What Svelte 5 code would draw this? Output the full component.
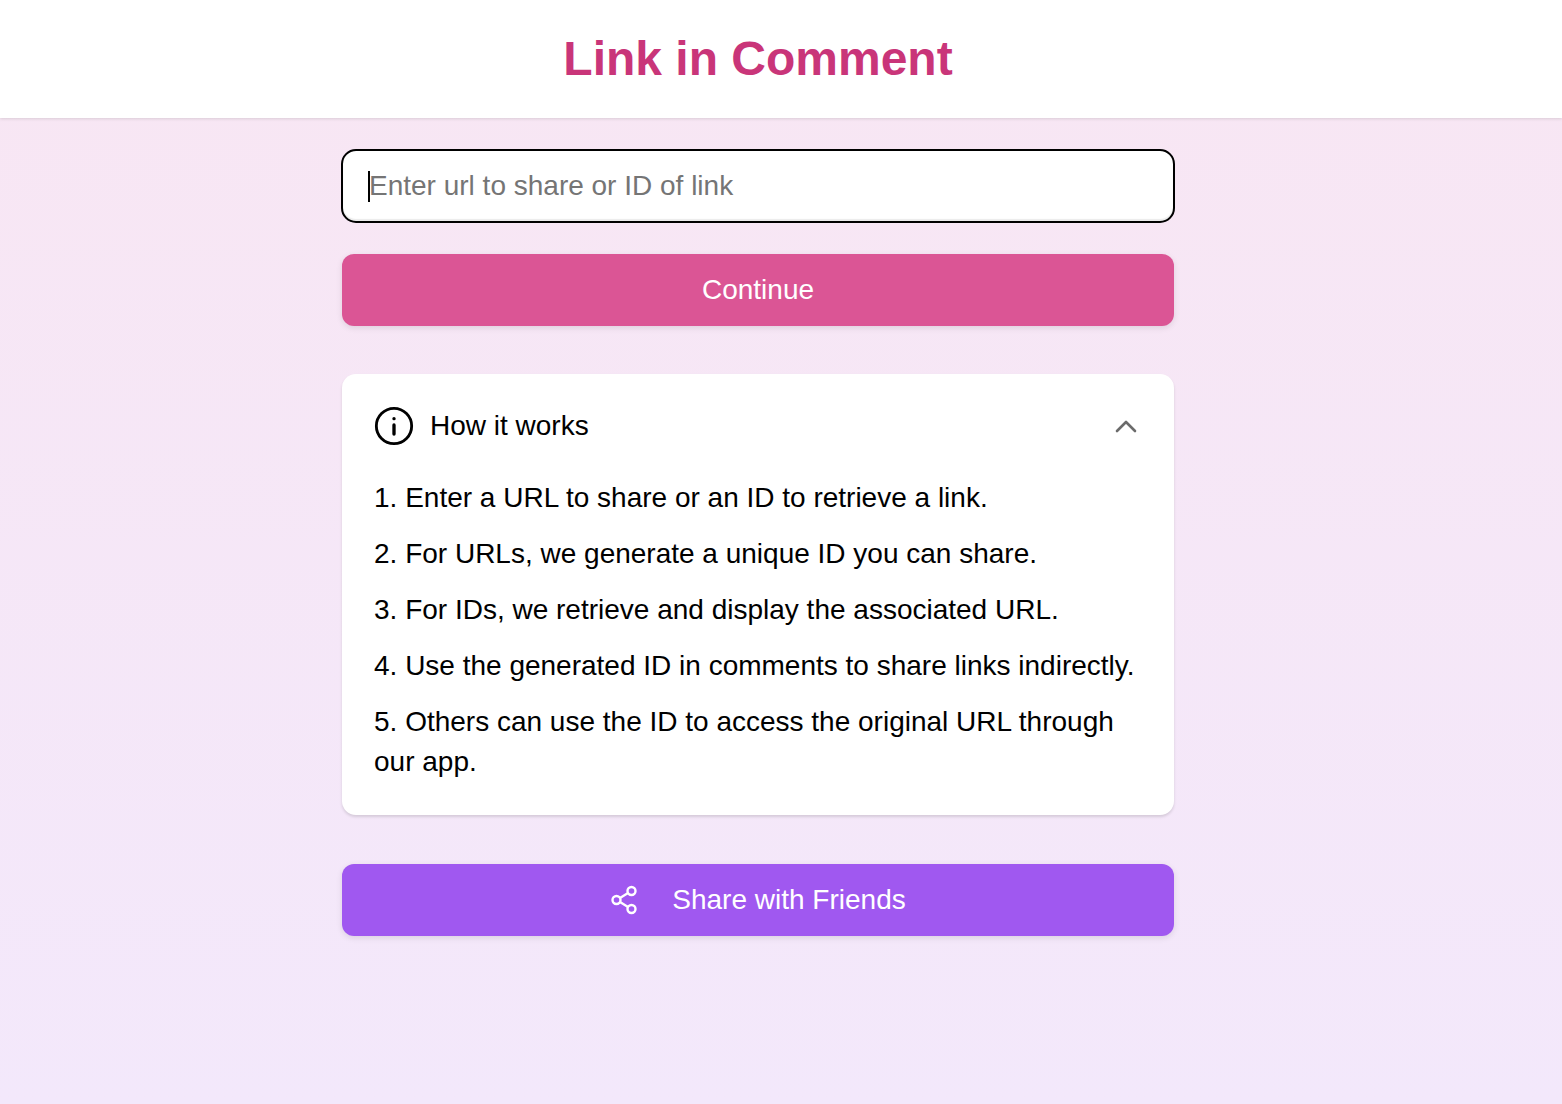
<script lang="ts">
let open = $state(true);
let url = $state('');

const steps = [
  'Enter a URL to share or an ID to retrieve a link.',
  'For URLs, we generate a unique ID you can share.',
  'For IDs, we retrieve and display the associated URL.',
  'Use the generated ID in comments to share links indirectly.',
  'Others can use the ID to access the original URL through our app.',
];
</script>

<div class="page">
  <header class="top">
    <h1>Link in Comment</h1>
  </header>

  <main class="content">
    <div class="field">
      <input type="text" placeholder="Enter url to share or ID of link" bind:value={url} />
      {#if !url}<span class="caret"></span>{/if}
    </div>

    <button class="btn continue">Continue</button>

    <section class="card">
      <button class="card-head" onclick={() => (open = !open)}>
        <svg class="info" viewBox="0 0 24 24" fill="none" stroke="currentColor" stroke-width="2" stroke-linecap="round" stroke-linejoin="round">
          <circle cx="12" cy="12" r="10.6" stroke-width="1.7" />
          <path d="M12 11.4v5.4" />
          <path d="M12 7.6h.01" />
        </svg>
        <span class="card-title">How it works</span>
        <svg class="chevron" class:closed={!open} viewBox="0 0 24 24" fill="none" stroke="currentColor" stroke-width="2.6" stroke-linecap="round" stroke-linejoin="round">
          <path d="M3 17 12 8l9 9" />
        </svg>
      </button>
      {#if open}
        <ol class="steps">
          {#each steps as step, i}
            <li>{i + 1}. {step}</li>
          {/each}
        </ol>
      {/if}
    </section>

    <button class="btn share">
      <svg class="share-icon" viewBox="0 0 28 30" fill="none" stroke="currentColor" stroke-width="2.4">
        <circle cx="21.5" cy="6" r="4" />
        <circle cx="6.5" cy="15" r="4" />
        <circle cx="21.5" cy="24" r="4" />
        <path d="M10 13 18 8M10 17l8 5" />
      </svg>
      <span>Share with Friends</span>
    </button>
  </main>
</div>

<style>
  :global(body) {
    margin: 0;
    font-family: 'Liberation Sans', Arial, sans-serif;
  }

  .page {
    min-height: 1104px;
    box-sizing: border-box;
    background: linear-gradient(to bottom, #f8e6f3, #f3e8fb);
    color: #000;
  }

  .top {
    height: 118px;
    display: flex;
    align-items: center;
    justify-content: center;
    padding-right: 46px;
    background: #fff;
    box-shadow: 0 1px 3px rgba(0, 0, 0, 0.12);
  }
  h1 {
    margin: 0 0 2px;
    font-size: 48px;
    font-weight: 700;
    color: #c93579;
  }

  .content {
    width: 832px;
    margin-left: 342px;
    padding-top: 32px;
    display: flex;
    flex-direction: column;
  }

  .field {
    position: relative;
  }
  input {
    display: block;
    width: 100%;
    height: 72px;
    box-sizing: border-box;
    padding: 0 26px;
    border: 1px solid #ddd;
    border-radius: 14px;
    outline: 2px solid #000;
    outline-offset: -1px;
    background: #fff;
    font: inherit;
    font-size: 28px;
    color: #000;
    caret-color: transparent;
    box-shadow: inset 0 -2px 1px rgba(0, 0, 0, 0.08);
  }
  input::placeholder {
    color: #757575;
    opacity: 1;
  }
  .caret {
    position: absolute;
    left: 26px;
    top: 21px;
    width: 2px;
    height: 31px;
    background: #000;
  }

  .btn {
    display: flex;
    align-items: center;
    justify-content: center;
    width: 100%;
    height: 72px;
    border: none;
    border-radius: 12px;
    font: inherit;
    font-size: 28px;
    color: #fff;
    cursor: pointer;
    box-shadow: 0 2px 6px rgba(0, 0, 0, 0.1);
  }
  .continue {
    margin-top: 32px;
    background: #db5595;
  }
  .share {
    margin-top: 49px;
    gap: 34px;
    background: #a058f0;
  }
  .share-icon {
    width: 28px;
    height: 30px;
  }

  .card {
    margin-top: 48px;
    height: 441px;
    box-sizing: border-box;
    padding: 32px;
    background: #fff;
    border-radius: 14px;
    box-shadow: 0 2px 3px rgba(0, 0, 0, 0.13);
  }
  .card-head {
    display: flex;
    align-items: center;
    width: 100%;
    height: 40px;
    padding: 0;
    border: none;
    background: none;
    font: inherit;
    font-size: 28px;
    color: #000;
    cursor: pointer;
  }
  .info {
    width: 40px;
    height: 40px;
    margin-right: 16px;
  }
  .card-title {
    flex: 1;
    text-align: left;
  }
  .chevron {
    width: 24px;
    height: 24px;
    margin-right: 4px;
    color: #6b6b6b;
  }
  .chevron.closed {
    transform: rotate(180deg);
  }

  .steps {
    list-style: none;
    margin: 32px 0 0;
    padding: 0;
    display: flex;
    flex-direction: column;
    gap: 16px;
    font-size: 28px;
    line-height: 40px;
  }
</style>
